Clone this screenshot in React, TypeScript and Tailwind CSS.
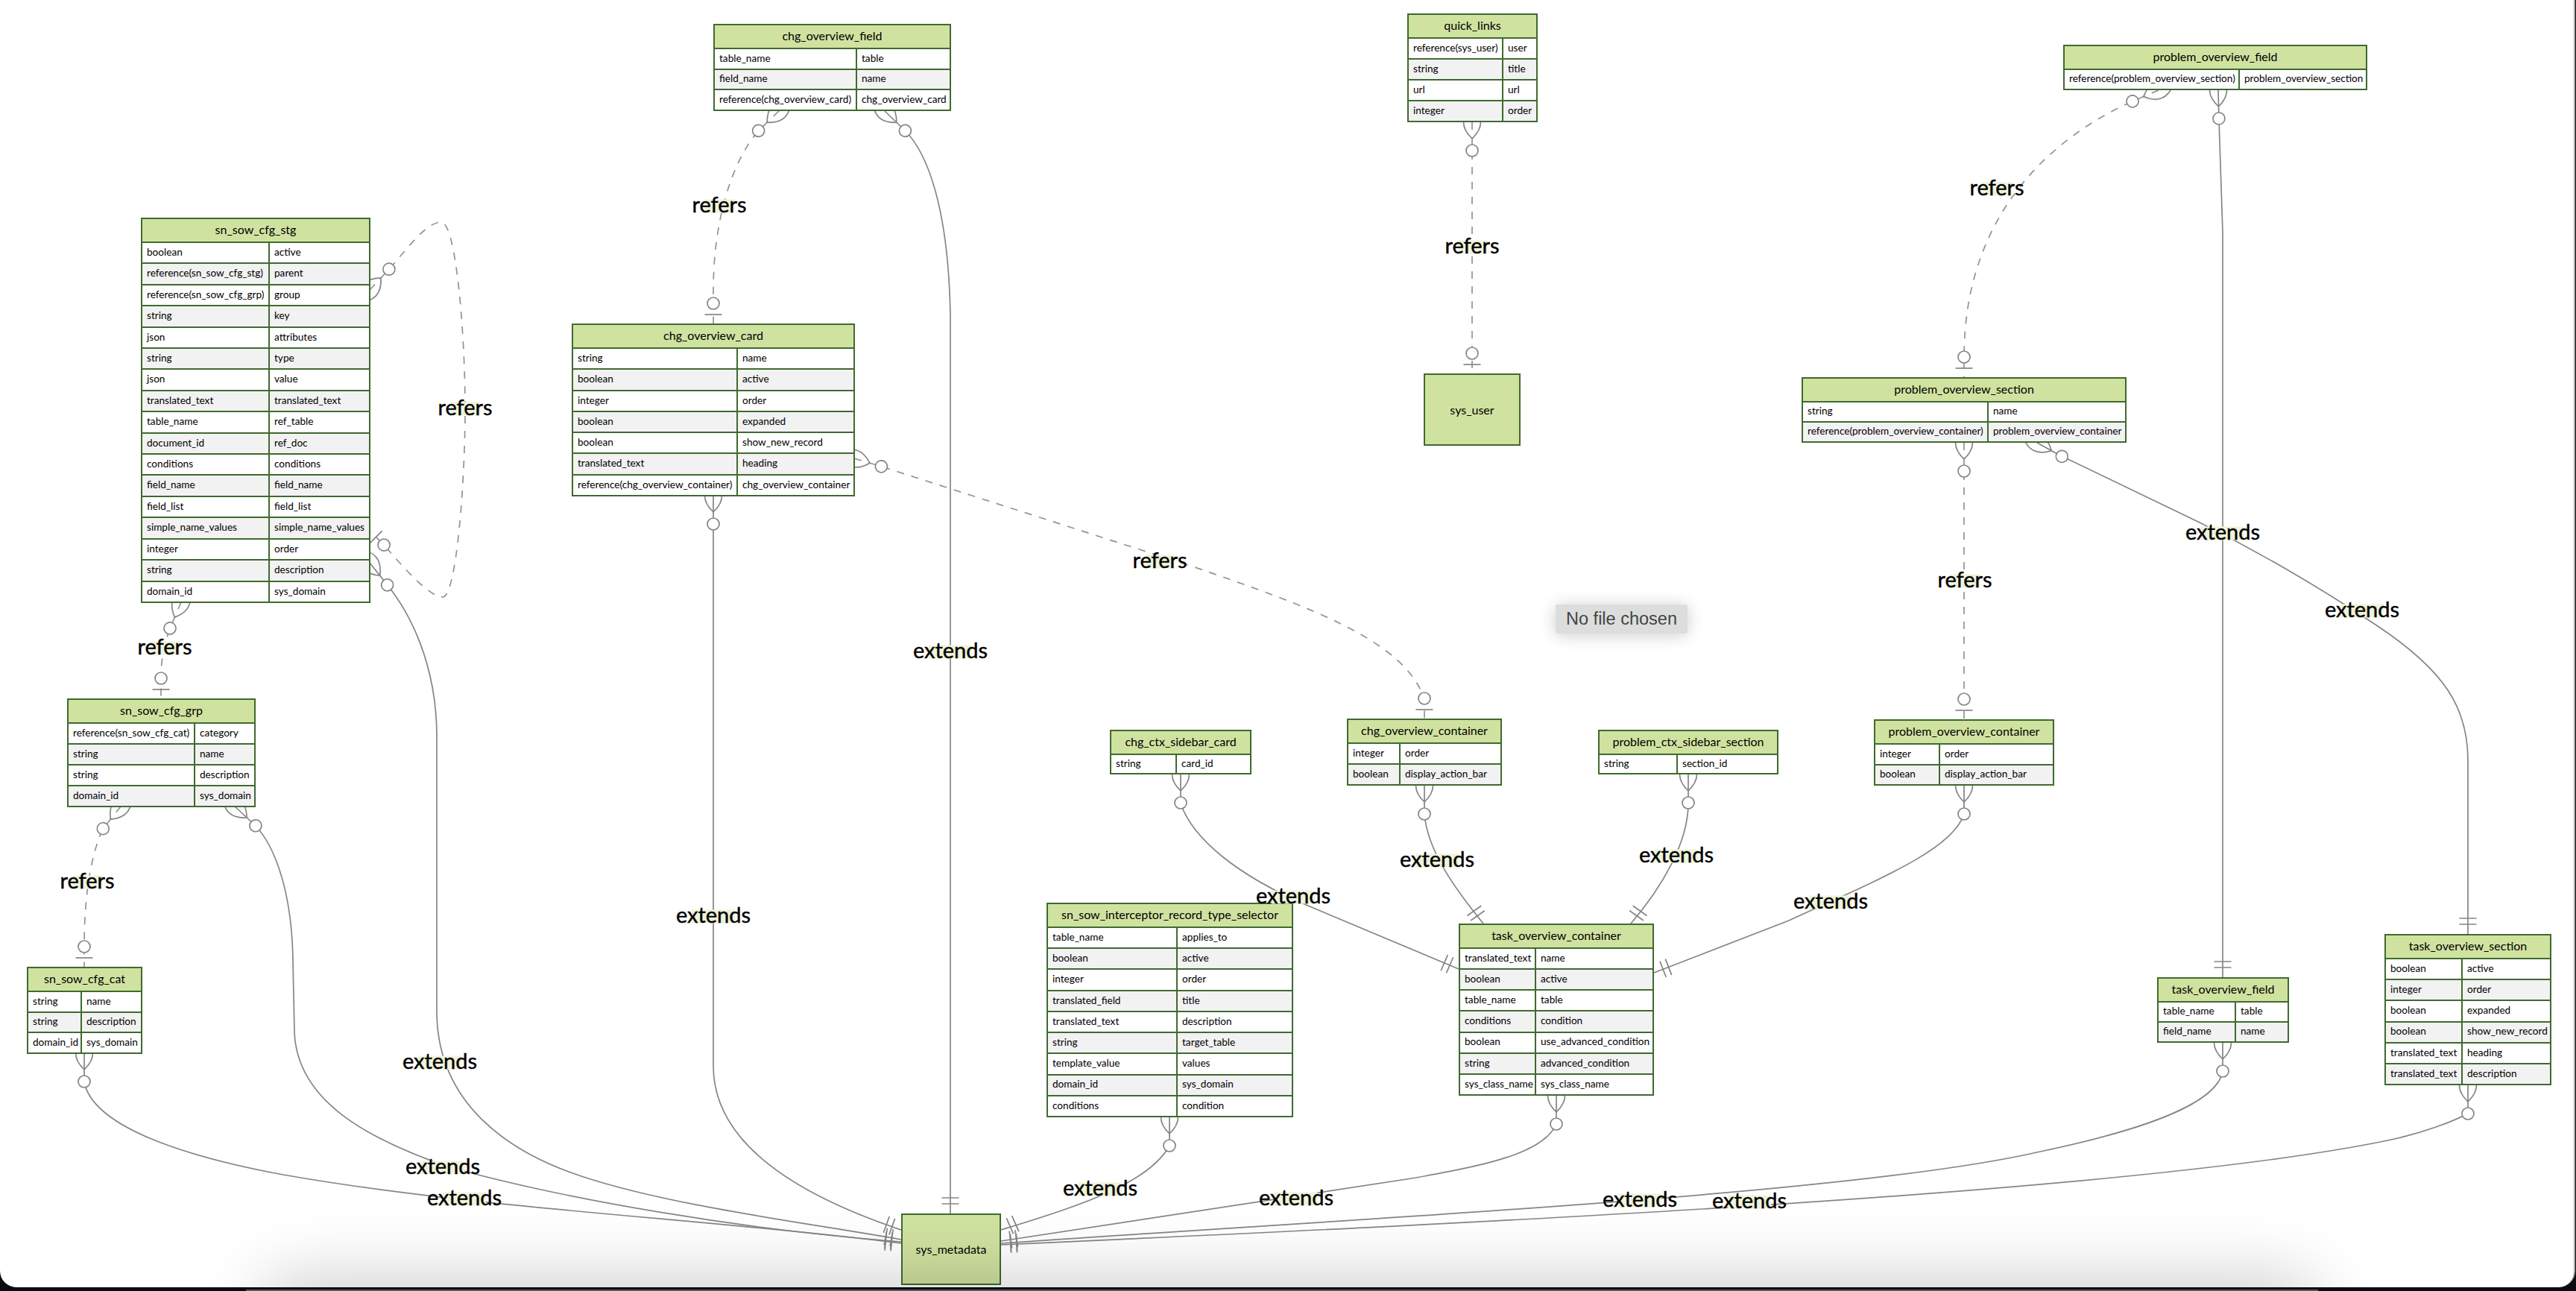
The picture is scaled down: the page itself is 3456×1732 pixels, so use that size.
import React from 'react';

type Row = [string, string];
type Entity = { name: string; x: number; y: number; r: number; b: number; div?: number; head?: number; rows?: Row[] };

const entities: Entity[] = [
  { name: 'sn_sow_cfg_stg', x: 189, y: 292, r: 497, b: 809, div: 362, rows: [
    ['boolean', 'active'], ['reference(sn_sow_cfg_stg)', 'parent'], ['reference(sn_sow_cfg_grp)', 'group'], ['string', 'key'],
    ['json', 'attributes'], ['string', 'type'], ['json', 'value'], ['translated_text', 'translated_text'], ['table_name', 'ref_table'],
    ['document_id', 'ref_doc'], ['conditions', 'conditions'], ['field_name', 'field_name'], ['field_list', 'field_list'],
    ['simple_name_values', 'simple_name_values'], ['integer', 'order'], ['string', 'description'], ['domain_id', 'sys_domain'],
  ] },
  { name: 'sn_sow_cfg_grp', x: 90, y: 937, r: 343, b: 1083, div: 262, rows: [
    ['reference(sn_sow_cfg_cat)', 'category'], ['string', 'name'], ['string', 'description'], ['domain_id', 'sys_domain'],
  ] },
  { name: 'sn_sow_cfg_cat', x: 36, y: 1297, r: 191, b: 1414, div: 110, rows: [
    ['string', 'name'], ['string', 'description'], ['domain_id', 'sys_domain'],
  ] },
  { name: 'chg_overview_field', x: 957, y: 32, r: 1276, b: 149, div: 1150, rows: [
    ['table_name', 'table'], ['field_name', 'name'], ['reference(chg_overview_card)', 'chg_overview_card'],
  ] },
  { name: 'chg_overview_card', x: 767, y: 434, r: 1147, b: 666, div: 990, rows: [
    ['string', 'name'], ['boolean', 'active'], ['integer', 'order'], ['boolean', 'expanded'], ['boolean', 'show_new_record'],
    ['translated_text', 'heading'], ['reference(chg_overview_container)', 'chg_overview_container'],
  ] },
  { name: 'quick_links', x: 1888, y: 18, r: 2063, b: 164, div: 2017, rows: [
    ['reference(sys_user)', 'user'], ['string', 'title'], ['url', 'url'], ['integer', 'order'],
  ] },
  { name: 'sys_user', x: 1910, y: 501, r: 2040, b: 598 },
  { name: 'problem_overview_field', x: 2768, y: 60, r: 3176, b: 121, div: 3005, rows: [
    ['reference(problem_overview_section)', 'problem_overview_section'],
  ] },
  { name: 'problem_overview_section', x: 2417, y: 506, r: 2853, b: 594, div: 2668, rows: [
    ['string', 'name'], ['reference(problem_overview_container)', 'problem_overview_container'],
  ] },
  { name: 'chg_ctx_sidebar_card', x: 1489, y: 979, r: 1679, b: 1039, div: 1579, rows: [['string', 'card_id']] },
  { name: 'chg_overview_container', x: 1807, y: 964, r: 2015, b: 1054, div: 1879, rows: [
    ['integer', 'order'], ['boolean', 'display_action_bar'],
  ] },
  { name: 'problem_ctx_sidebar_section', x: 2144, y: 979, r: 2386, b: 1039, div: 2251, rows: [['string', 'section_id']] },
  { name: 'problem_overview_container', x: 2514, y: 965, r: 2756, b: 1054, div: 2603, rows: [
    ['integer', 'order'], ['boolean', 'display_action_bar'],
  ] },
  { name: 'sn_sow_interceptor_record_type_selector', x: 1404, y: 1211, r: 1735, b: 1499, div: 1580, rows: [
    ['table_name', 'applies_to'], ['boolean', 'active'], ['integer', 'order'], ['translated_field', 'title'],
    ['translated_text', 'description'], ['string', 'target_table'], ['template_value', 'values'], ['domain_id', 'sys_domain'], ['conditions', 'condition'],
  ] },
  { name: 'task_overview_container', x: 1957, y: 1239, r: 2219, b: 1470, div: 2061, rows: [
    ['translated_text', 'name'], ['boolean', 'active'], ['table_name', 'table'], ['conditions', 'condition'], ['boolean', 'use_advanced_condition'],
    ['string', 'advanced_condition'], ['sys_class_name', 'sys_class_name'],
  ] },
  { name: 'task_overview_field', x: 2894, y: 1311, r: 3071, b: 1399, div: 3000, rows: [
    ['table_name', 'table'], ['field_name', 'name'],
  ] },
  { name: 'task_overview_section', x: 3199, y: 1253, r: 3423, b: 1456, div: 3304, rows: [
    ['boolean', 'active'], ['integer', 'order'], ['boolean', 'expanded'], ['boolean', 'show_new_record'], ['translated_text', 'heading'], ['translated_text', 'description'],
  ] },
  { name: 'sys_metadata', x: 1209, y: 1628, r: 1343, b: 1724 },
];

type Mark = { t: 'many' | 'one' | 'two'; p: [number, number]; q: [number, number] };
type Edge = { d: string; dashed?: boolean; marks: Mark[] };

const edges: Edge[] = [
  { dashed: true, d: 'M1045 149 L1019 174 C990 205 957 280 957 390 L957 434', marks: [
    { t: 'many', p: [1045, 149], q: [1019, 174] }, { t: 'one', p: [957, 434], q: [957, 400] } ] },
  { d: 'M1187 149 L1213 174 C1245 205 1272 280 1275 420 L1275 1628', marks: [
    { t: 'many', p: [1187, 149], q: [1213, 174] }, { t: 'two', p: [1275, 1628], q: [1275, 1590] } ] },
  { d: 'M957 665 L957 1430 C957 1530 1060 1600 1209 1650', marks: [
    { t: 'many', p: [957, 665], q: [957, 704] }, { t: 'two', p: [1209, 1650], q: [1173, 1637] } ] },
  { d: 'M496 755 L519 784 C550 822 585 890 586 985 L586 1360 C588 1480 680 1545 780 1578 C900 1618 1080 1640 1209 1663', marks: [
    { t: 'many', p: [496, 755], q: [519, 784] }, { t: 'two', p: [1209, 1663], q: [1173, 1656] } ] },
  { d: 'M315 1082 L341 1106 C370 1135 392 1200 393 1290 L395 1384 C398 1480 500 1530 600 1565 C760 1610 1000 1650 1209 1666', marks: [
    { t: 'many', p: [315, 1082], q: [341, 1106] }, { t: 'two', p: [1209, 1666], q: [1173, 1662] } ] },
  { d: 'M113 1413 L113 1452 C125 1510 240 1550 380 1576 C640 1622 950 1635 1209 1668', marks: [
    { t: 'many', p: [113, 1413], q: [113, 1452] }, { t: 'two', p: [1209, 1668], q: [1173, 1665] } ] },
  { d: 'M1569 1499 L1569 1537 C1540 1590 1440 1620 1343 1650', marks: [
    { t: 'many', p: [1569, 1499], q: [1569, 1537] }, { t: 'two', p: [1343, 1650], q: [1375, 1636] } ] },
  { d: 'M2088 1470 L2088 1508 C2070 1550 1980 1565 1900 1580 L1343 1665', marks: [
    { t: 'many', p: [2088, 1470], q: [2088, 1508] }, { t: 'two', p: [1343, 1665], q: [1380, 1659] } ] },
  { d: 'M2982 1399 L2982 1437 C2975 1480 2880 1515 2737 1545 C2500 1600 1900 1630 1343 1668', marks: [
    { t: 'many', p: [2982, 1399], q: [2982, 1437] }, { t: 'two', p: [1343, 1668], q: [1380, 1666] } ] },
  { d: 'M3311 1456 L3311 1494 C3290 1505 3250 1520 3208 1529 C2871 1600 2000 1640 1343 1670', marks: [
    { t: 'many', p: [3311, 1456], q: [3311, 1494] }, { t: 'two', p: [1343, 1670], q: [1380, 1668] } ] },
  { dashed: true, d: 'M496 389 L523 360 C548 332 572 298 592 298 C612 298 624 450 624 548 C624 650 612 801 594 801 C576 801 540 760 516 732 L496 712', marks: [
    { t: 'many', p: [496, 389], q: [523, 360] }, { t: 'one', p: [496, 712], q: [516, 732] } ] },
  { dashed: true, d: 'M243 808 L228 843 C222 860 216 880 216 909 L216 937', marks: [
    { t: 'many', p: [243, 808], q: [228, 843] }, { t: 'one', p: [216, 937], q: [216, 900] } ] },
  { dashed: true, d: 'M162 1082 L138 1112 C125 1140 113 1190 113 1269 L113 1297', marks: [
    { t: 'many', p: [162, 1082], q: [138, 1112] }, { t: 'one', p: [113, 1297], q: [113, 1260] } ] },
  { dashed: true, d: 'M1146 615 L1183 626 L1600 760 C1760 815 1885 860 1911 938 L1911 964', marks: [
    { t: 'many', p: [1146, 615], q: [1183, 626] }, { t: 'one', p: [1911, 964], q: [1911, 930] } ] },
  { dashed: true, d: 'M1975 164 L1975 501', marks: [
    { t: 'many', p: [1975, 164], q: [1975, 202] }, { t: 'one', p: [1975, 501], q: [1975, 470] } ] },
  { dashed: true, d: 'M2896 121 L2863 135 C2750 185 2635 290 2635 479 L2635 506', marks: [
    { t: 'many', p: [2896, 121], q: [2863, 135] }, { t: 'one', p: [2635, 506], q: [2635, 470] } ] },
  { dashed: true, d: 'M2635 594 L2635 965', marks: [
    { t: 'many', p: [2635, 594], q: [2635, 633] }, { t: 'one', p: [2635, 965], q: [2635, 930] } ] },
  { d: 'M2976 121 L2977 161 L2982 312 L2982 1311', marks: [
    { t: 'many', p: [2976, 121], q: [2977, 161] }, { t: 'two', p: [2982, 1311], q: [2982, 1280] } ] },
  { d: 'M2733 594 L2762 610 L2949 700 C3050 750 3130 800 3190 840 C3280 900 3311 950 3311 1020 L3311 1253', marks: [
    { t: 'many', p: [2733, 594], q: [2762, 610] }, { t: 'two', p: [3311, 1253], q: [3311, 1220] } ] },
  { d: 'M1584 1039 L1584 1078 C1600 1125 1660 1175 1757 1216 L1957 1300', marks: [
    { t: 'many', p: [1584, 1039], q: [1584, 1078] }, { t: 'two', p: [1957, 1300], q: [1920, 1284] } ] },
  { d: 'M1911 1054 L1911 1092 C1915 1140 1950 1190 1990 1239', marks: [
    { t: 'many', p: [1911, 1054], q: [1911, 1092] }, { t: 'two', p: [1990, 1239], q: [1968, 1208] } ] },
  { d: 'M2265 1039 L2265 1078 C2265 1130 2230 1190 2188 1239', marks: [
    { t: 'many', p: [2265, 1039], q: [2265, 1078] }, { t: 'two', p: [2188, 1239], q: [2210, 1208] } ] },
  { d: 'M2635 1054 L2635 1092 C2620 1140 2520 1180 2400 1235 L2219 1305', marks: [
    { t: 'many', p: [2635, 1054], q: [2635, 1092] }, { t: 'two', p: [2219, 1305], q: [2255, 1291] } ] },
];

const labels: { text: string; x: number; y: number }[] = [
  { text: 'refers', x: 965, y: 273 },
  { text: 'refers', x: 624, y: 545 },
  { text: 'refers', x: 221, y: 866 },
  { text: 'refers', x: 117, y: 1180 },
  { text: 'refers', x: 1975, y: 328 },
  { text: 'refers', x: 2679, y: 250 },
  { text: 'refers', x: 2636, y: 776 },
  { text: 'refers', x: 1556, y: 750 },
  { text: 'extends', x: 1275, y: 871 },
  { text: 'extends', x: 957, y: 1226 },
  { text: 'extends', x: 590, y: 1422 },
  { text: 'extends', x: 594, y: 1563 },
  { text: 'extends', x: 623, y: 1605 },
  { text: 'extends', x: 1476, y: 1592 },
  { text: 'extends', x: 1739, y: 1605 },
  { text: 'extends', x: 2200, y: 1607 },
  { text: 'extends', x: 2347, y: 1609 },
  { text: 'extends', x: 2982, y: 712 },
  { text: 'extends', x: 3169, y: 816 },
  { text: 'extends', x: 1735, y: 1200 },
  { text: 'extends', x: 1928, y: 1151 },
  { text: 'extends', x: 2249, y: 1145 },
  { text: 'extends', x: 2456, y: 1207 },
];

const Marker = ({ m }: { m: Mark }) => {
  const deg = (Math.atan2(m.q[1] - m.p[1], m.q[0] - m.p[0]) * 180) / Math.PI;
  return (
    <g transform={`translate(${m.p[0]} ${m.p[1]}) rotate(${deg})`} fill="none" stroke="#858585" strokeWidth={1.7}>
      {m.t === 'many' && (
        <>
          <path d="M-22 0 Q0 -23 22 0 Q0 23 -22 0" />
          <circle cx={38} cy={0} r={8} fill="#fff" />
        </>
      )}
      {m.t === 'one' && (
        <>
          <path d="M12 -11.5 L12 11.5" />
          <circle cx={27} cy={0} r={8} fill="#fff" />
        </>
      )}
      {m.t === 'two' && <path d="M13 -11.5 L13 11.5 M21 -11.5 L21 11.5" />}
    </g>
  );
};

const Table = ({ e }: { e: Entity }) => {
  const hasRows = !!e.rows;
  return (
    <div
      className={`absolute box-border flex flex-col border-2 border-[#3f6a2f] bg-[#d0e2a0] text-black ${hasRows ? '' : 'items-center justify-center'}`}
      style={{ left: e.x, top: e.y, width: e.r - e.x, height: e.b - e.y }}
    >
      {hasRows ? (
        <>
          <div className="flex h-[30px] shrink-0 items-center justify-center whitespace-nowrap pb-[2px] text-[16px]">{e.name}</div>
          {e.rows!.map(([type, name], i) => (
            <div
              key={i}
              className={`grid min-h-0 flex-1 items-stretch border-t-2 border-[#3f6a2f] text-[13.6px] ${i % 2 ? 'bg-[#f2f2f2]' : 'bg-white'}`}
              style={{ gridTemplateColumns: `${e.div! - e.x - 2}px 1fr` }}
            >
              <div className="flex items-center overflow-hidden whitespace-nowrap border-r-2 border-[#3f6a2f] pb-[2px] pl-[6px]">{type}</div>
              <div className="flex items-center overflow-hidden whitespace-nowrap pb-[2px] pl-[6px]">{name}</div>
            </div>
          ))}
        </>
      ) : (
        <span className="text-[16px]">{e.name}</span>
      )}
    </div>
  );
};

const Label = ({ text, x, y }: { text: string; x: number; y: number }) => (
  <div className="absolute -translate-x-1/2 -translate-y-1/2 whitespace-nowrap text-[29px] leading-none text-black [-webkit-text-stroke:0.4px_black]" style={{ left: x, top: y }}>
    <span
      className={`absolute left-1/2 top-1/2 -translate-x-1/2 -translate-y-[6px] bg-[#eef3d9] ${text === 'refers' ? 'h-[18px] w-[40px]' : 'h-[18px] w-[58px]'}`}
    />
    <span className="relative">{text}</span>
  </div>
);

export default function App() {
  return (
    <div className="h-[1732px] w-[3456px] overflow-hidden bg-[#070d13] [font-family:Lato,'Noto_Sans',sans-serif]">
      <div className="relative h-[1727px] w-[3455px] overflow-hidden rounded-b-[22px] border-r-2 border-[#a6a6a6] bg-white">
        <svg className="absolute left-0 top-0" width={3456} height={1732} viewBox="0 0 3456 1732">
          {edges.map((e, i) => (
            <path key={i} d={e.d} fill="none" stroke={e.dashed ? '#939393' : '#858585'} strokeWidth={1.7} strokeDasharray={e.dashed ? '10 10' : undefined} />
          ))}
          {edges.map((e, i) => e.marks.map((m, j) => <Marker key={`${i}-${j}`} m={m} />))}
        </svg>

        {entities.map(e => <Table key={e.name} e={e} />)}
        {labels.map((l, i) => <Label key={i} {...l} />)}

        <div className="absolute left-[2087px] top-[811px] flex h-[39px] w-[177px] items-center justify-center rounded-[3px] bg-[#dcdedd] text-[23.5px] text-[#444] shadow-[0_2px_22px_rgba(0,0,0,0.2)] [font-family:'Liberation_Sans',sans-serif]">
          No file chosen
        </div>

        {/* shadow of the thing sitting under the window */}
        <div className="absolute left-[380px] top-[1745px] h-[30px] w-[2700px] rounded-full shadow-[0_0_90px_30px_rgba(0,0,0,0.2)]" />
      </div>
      <div className="ml-[330px] mt-[3px] h-[2px] w-[2780px] bg-[#55595c]" />
    </div>
  );
}
